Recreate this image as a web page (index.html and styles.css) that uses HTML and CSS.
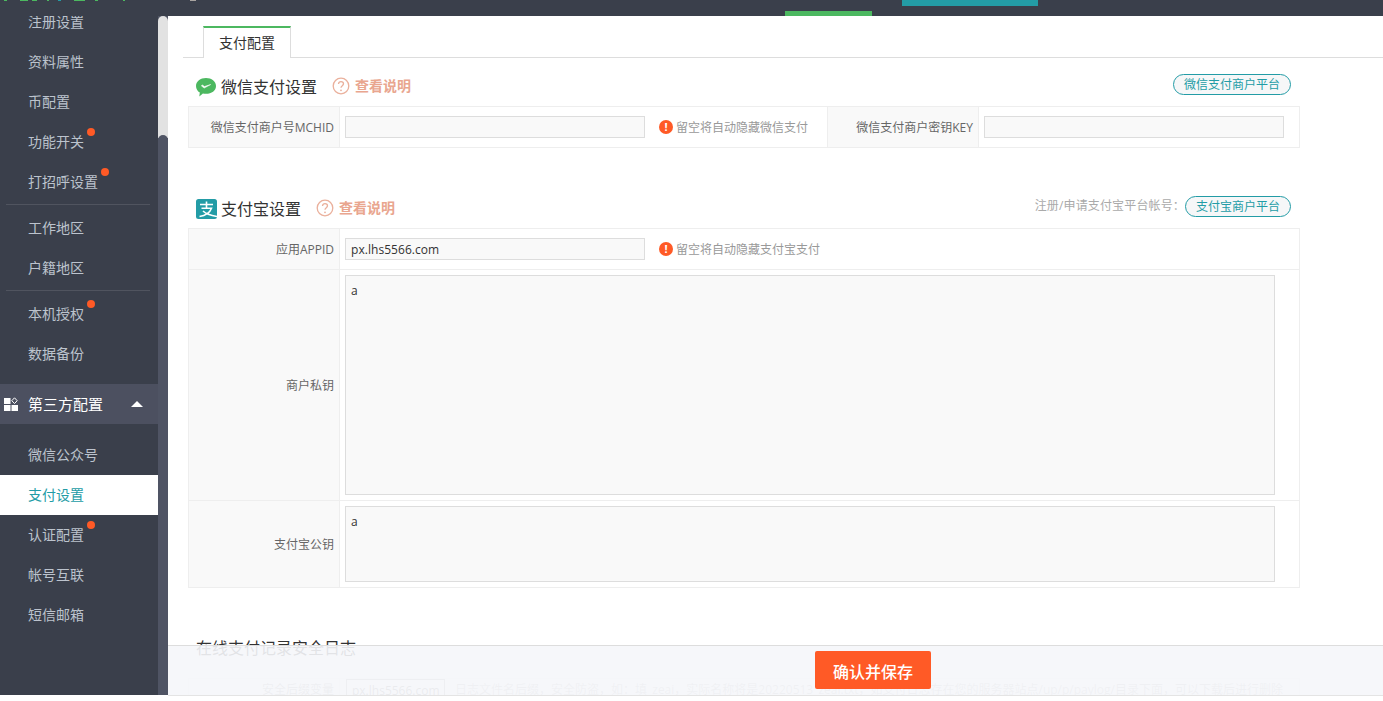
FILE: index.html
```html
<!DOCTYPE html>
<html lang="zh">
<head>
<meta charset="utf-8">
<title>支付设置</title>
<link rel="stylesheet" href="styles.css">
</head>
<body>
<header class="top">
  <div class="top-logo"></div>
  <div class="top-dot"></div>
  <div class="top-green"></div>
  <div class="top-teal"></div>
</header>
<div class="app">
  <aside class="side">
    <nav class="nav">
      <a class="item">注册设置</a>
      <a class="item">资料属性</a>
      <a class="item">币配置</a>
      <a class="item"><span class="dotted">功能开关</span></a>
      <a class="item"><span class="dotted">打招呼设置</span></a>
      <hr class="sep">
      <a class="item">工作地区</a>
      <a class="item">户籍地区</a>
      <hr class="sep">
      <a class="item"><span class="dotted">本机授权</span></a>
      <a class="item">数据备份</a>
      <div class="group">
        <svg class="group-icon" width="14" height="14" viewBox="0 0 14 14"><rect x="0" y="1" width="6.5" height="6" fill="#fff"/><rect x="0" y="8" width="6.5" height="6" fill="#fff"/><rect x="7.5" y="8" width="6.5" height="6" fill="#fff"/><path d="M10.5 .8l2.7 2.9-2.7 2.9-2.7-2.9z" fill="none" stroke="#fff"/></svg>
        <span class="group-label">第三方配置</span>
        <span class="caret"></span>
      </div>
      <a class="item sub">微信公众号</a>
      <a class="item active">支付设置</a>
      <a class="item"><span class="dotted">认证配置</span></a>
      <a class="item">帐号互联</a>
      <a class="item">短信邮箱</a>
    </nav>
    <div class="rail"><div class="thumb"></div></div>
    <div class="collapse">
      <svg width="8" height="14" viewBox="0 0 8 14"><path d="M7 1L1.5 7 7 13" fill="none" stroke="#d5dbe6" stroke-width="1.6"/></svg>
    </div>
  </aside>
  <main class="main">
    <div class="tabs"><span class="tab">支付配置</span></div>

    <section class="sec sec-wx">
      <div class="head">
        <svg class="logo" width="22" height="20" viewBox="0 0 22 20"><path d="M11 1c5.600 0 10 3.400 10 7.900s-4.400 7.900-10 7.900c-1.100 0-2.100-.1-3.100-.4L4.300 19.500l.5-3.900C2.500 14.100 1 11.700 1 8.900 1 4.400 5.400 1 11 1z" fill="#4cb860"/><path d="M6.300 8.800l2.900 2.300 6.500-3.600-6.300 2-1.900-1.500z" fill="#fff" stroke="#fff" stroke-width=".5"/></svg>
        <h2 class="title">微信支付设置</h2>
        <svg class="q" width="18" height="18" viewBox="0 0 18 18"><circle cx="9" cy="9" r="7.800" fill="none" stroke="#eab09c" stroke-width="1.300"/><path d="M6.500 7c0-1.500 1.100-2.400 2.500-2.400s2.500.9 2.500 2.200c0 1.800-2.500 1.900-2.500 4" fill="none" stroke="#eab09c" stroke-width="1.300"/><circle cx="9" cy="13.300" r=".9" fill="#eab09c"/></svg>
        <a class="help">查看说明</a>
        <div class="head-right"><a class="pill pill-wx">微信支付商户平台</a></div>
      </div>
      <div class="tbl">
        <div class="row row-wx">
          <div class="lab">微信支付商户号MCHID</div>
          <div class="val val-a">
            <span class="inp"></span>
            <span class="warn"><i class="warn-i">!</i>留空将自动隐藏微信支付</span>
          </div>
          <div class="lab lab-2">微信支付商户密钥KEY</div>
          <div class="val"><span class="inp"></span></div>
        </div>
      </div>
    </section>

    <section class="sec sec-ali">
      <div class="head">
        <svg class="logo logo-ali" width="21" height="20" viewBox="0 0 21 20"><rect width="21" height="20" rx="2.500" fill="#239ca6"/><path d="M4 5.500h13M10.500 2.500V9M5.500 9.300h10c-1.500 4-5.500 7.300-12 8.200M7 12c3 3 7 4.300 14 5.500" fill="none" stroke="#fff" stroke-width="1.600"/></svg>
        <h2 class="title">支付宝设置</h2>
        <svg class="q" width="18" height="18" viewBox="0 0 18 18"><circle cx="9" cy="9" r="7.800" fill="none" stroke="#eab09c" stroke-width="1.300"/><path d="M6.500 7c0-1.500 1.100-2.400 2.500-2.400s2.500.9 2.500 2.200c0 1.800-2.500 1.900-2.500 4" fill="none" stroke="#eab09c" stroke-width="1.300"/><circle cx="9" cy="13.300" r=".9" fill="#eab09c"/></svg>
        <a class="help">查看说明</a>
        <div class="head-right"><span class="hint">注册/申请支付宝平台帐号：</span><a class="pill">支付宝商户平台</a></div>
      </div>
      <div class="tbl">
        <div class="row row-a">
          <div class="lab">应用APPID</div>
          <div class="val val-a">
            <span class="inp inp-text">px.lhs5566.com</span>
            <span class="warn"><i class="warn-i">!</i>留空将自动隐藏支付宝支付</span>
          </div>
        </div>
        <div class="row row-b">
          <div class="lab">商户私钥</div>
          <div class="val"><div class="area area-b">a</div></div>
        </div>
        <div class="row row-c">
          <div class="lab">支付宝公钥</div>
          <div class="val"><div class="area area-c">a</div></div>
        </div>
      </div>
    </section>

    <section class="sec sec-log">
      <div class="head-log"><h2 class="title">在线支付记录安全日志</h2></div>
      <div class="row row-log">
        <div class="lab-log">安全后缀变量</div>
        <div class="val-log">
          <span class="inp-log">px.lhs5566.com</span>
          <span class="log-note">日志文件名后缀，安全防盗，如：填_zeai，实际名称将是20220513_zeai.txt，如支付日志存在您的服务器站点/up/p/paylog/目录下面，可以下载后进行删除</span>
        </div>
      </div>
    </section>

    <div class="savebar"><button class="save" type="button">确认并保存</button></div>
  </main>
</div>
</body>
</html>
```
FILE: styles.css
```css
* { box-sizing: border-box; }
html, body { margin: 0; height: 701px; overflow: hidden; background: #fff; }
body { font: 12px/1.4 "Open Sans", "Noto Sans CJK SC", sans-serif; color: #666; }

.top { position: relative; height: 16px; background: #3a3f4b; }
.top-logo { position: absolute; left: 0; top: 0; width: 130px; height: 1px;
  background: linear-gradient(90deg, transparent 4px, #4cb860 4px 7px, transparent 7px 20px, #4cb860 20px 28px, transparent 28px 32px, #4cb860 32px 37px, transparent 37px 47px, #4cb860 47px 49px, transparent 49px 58px, #239ca6 58px 61px, transparent 61px 74px, #4cb860 74px 85px, transparent 85px 95px, #4cb860 95px 98px, transparent 98px 123px, #4cb860 123px 125px, transparent 125px); }
.top-dot { position: absolute; left: 190px; top: 0; width: 6px; height: 1px; background: #a9a4a0; }
.top-green { position: absolute; left: 785px; top: 11px; width: 87px; height: 5px; background: #4cb860; }
.top-teal { position: absolute; left: 902px; top: 0; width: 136px; height: 6px; background: #239ca6; }

.app { display: flex; height: 679px; }

.side { position: relative; flex: 0 0 168px; display: flex; background: #3a3f4b; }
.nav { flex: 0 0 158px; height: 679px; overflow: hidden; }
.item { display: block; height: 40px; line-height: 39px; padding-left: 28px; font-size: 14px; color: #bcc3cd; }
.nav > .item:first-child { margin-top: -14px; }
.dotted { position: relative; }
.dotted::after { content: ""; position: absolute; right: -11px; top: -4px; width: 8px; height: 8px; border-radius: 50%; background: #ff5a26; }
.sep { height: 1px; margin: 2px 8px 3px 6px; border: 0; background: #50545f; }
.group { display: flex; align-items: center; height: 40px; margin-top: 10px; margin-bottom: 11px; padding-left: 4px; background: #4c5060; color: #fff; }
.group-icon { flex: none; }
.group-label { margin-left: 10px; font-size: 15px; line-height: 40px; }
.caret { margin-left: 28px; width: 0; height: 0; border: 6px solid transparent; border-top: 0; border-bottom: 6px solid #fff; }
.item.active { background: #fff; color: #239ca6; }
.rail { flex: 0 0 10px; background: #4f5464; position: relative; overflow: hidden; }
.thumb { height: 122px; margin-top: 0; background: #e2e2e2; border-radius: 5px 5px 0 0; }
.rail::after { content: ""; position: absolute; left: 0; right: 0; top: 119px; height: 5px; border-radius: 5px 5px 0 0; background: #4f5464; }
.collapse { position: absolute; left: 168px; top: 333px; width: 12px; height: 65px; display: flex; align-items: center; justify-content: center;
  padding-right: 2px; background: #4c5060; clip-path: polygon(0 0, 100% 7px, 100% 58px, 0 100%); }

.main { position: relative; flex: 1; overflow: hidden; background: #fff; border-bottom: 1px solid #e4e4e4; height: 680px; }
.tabs { height: 42px; margin-left: 15px; padding: 10px 0 0 20px; border-bottom: 1px solid #ddd; }
.tab { display: block; width: 88px; height: 32px; line-height: 30px; text-align: center; font-size: 14px; color: #333;
  background: #fff; border: 1px solid #ddd; border-top: 2px solid #4cb860; border-bottom: 0; }

.sec { width: 1112px; margin-left: 20px; }
.head { display: flex; align-items: center; position: relative; height: 33px; padding-bottom: 5px; }
.sec-wx { margin-top: 15px; }
.sec-wx .head { padding-left: 7px; }
.sec-ali { margin-top: 47px; }
.sec-ali .head { padding-left: 8px; }
.logo { flex: none; margin-right: 4px; }
.title { margin: 0; font-size: 16px; font-weight: 400; color: #333; line-height: 24px; }
.q { flex: none; margin-left: 15px; margin-right: 5px; margin-bottom: 2px; }
.help { font-size: 14px; font-weight: 700; color: #e9a68f; margin-bottom: 2px; }
.head-right { margin-left: auto; margin-right: 9px; margin-bottom: 5px; display: flex; align-items: center; }
.hint { color: #aaa; letter-spacing: .15px; }
.pill { display: block; height: 21px; line-height: 19px; padding: 0 10px; border: 1px solid #239ca6; border-radius: 11px; color: #239ca6; background: #f6f7f8; }

.tbl { border: 1px solid #eee; }
.row { display: flex; }
.row + .row { border-top: 1px solid #eee; }
.lab { flex: 0 0 151px; display: flex; align-items: center; justify-content: flex-end; padding: 2px 5px 0 0; background: #f9f9f9; border-right: 1px solid #eee; color: #666; }
.lab-2 { flex-basis: 152px; border-left: 1px solid #eee; }
.val { display: flex; align-items: center; padding-left: 5px; flex: 1; }
.val-a { flex: 0 0 487px; }
.row-wx { height: 40px; }
.row-a { height: 40px; }
.row-b { height: 231px; }
.row-c { height: 87px; }
.inp { display: block; flex: none; width: 300px; height: 22px; line-height: 20px; padding: 0 5px; border: 1px solid #ddd; background: #f9f9f9; color: #333; }
.inp-text { font-size: 12px; line-height: 21px; letter-spacing: .05px; }
.warn { display: flex; align-items: center; margin-left: 14px; padding-top: 2px; color: #999; }
.warn-i { width: 14px; height: 14px; margin: -2px 3px 0 0; border-radius: 50%; background: #ff5a26; color: #fff; font: 700 11px/14px "Open Sans", sans-serif; text-align: center; }
.area { width: 930px; padding: 7px 5px; border: 1px solid #ddd; background: #f9f9f9; color: #333; font-size: 12px; line-height: 16px; }
.area-b { height: 220px; }
.area-c { height: 76px; }

.sec-log { margin-top: 48px; }
.head-log { padding-left: 8px; }
.row-log { margin-top: 18px; height: 40px; border: 1px solid #eee; border-bottom: 0; }
.lab-log { flex: 0 0 151px; padding: 3px 5px 0 0; text-align: right; border-right: 1px solid #eee; font-size: 12px; color: #aaa; }
.val-log { display: flex; align-items: flex-start; padding-left: 6px; }
.inp-log { flex: none; width: 99px; height: 22px; line-height: 21px; padding: 0 5px; border: 1px solid #aaa; color: #888; font-size: 12px; white-space: nowrap; overflow: hidden; }
.log-note { margin-left: 10px; padding-top: 3px; white-space: nowrap; color: #bbb; }

.savebar { position: absolute; left: 0; right: 0; top: 629px; height: 50px; display: flex; align-items: flex-start; justify-content: center; padding: 5px 0 0 195px;
  background: rgba(245, 246, 250, .9); border-top: 1px solid #ddd; }
.save { width: 116px; height: 38px; border: 0; border-radius: 2px; background: #ff5a26; color: #fff; font: 500 16px/38px "Noto Sans CJK SC", sans-serif; }
```
